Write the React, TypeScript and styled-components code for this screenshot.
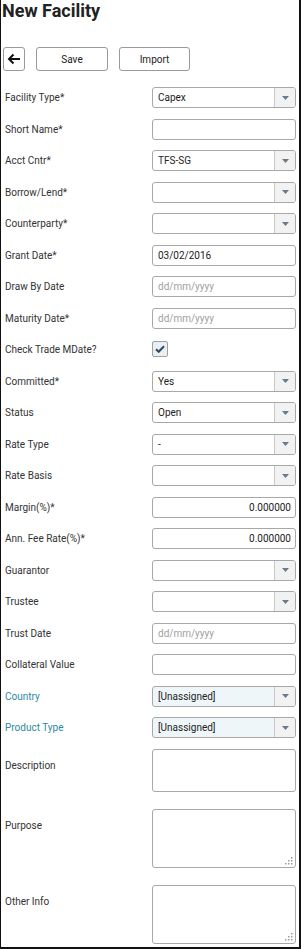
import styled, { createGlobalStyle } from "styled-components";

const GlobalStyle = createGlobalStyle`
  body {
    margin: 0;
    font-family: Roboto, "Liberation Sans", Arial, sans-serif;
    background: #fff;
  }
`;

const Page = styled.div`
  box-sizing: border-box;
  width: 301px;
  height: 949px;
  border-left: 1px solid #111;
  border-right: 2px solid #111;
  border-bottom: 2px solid #111;
  overflow: hidden;
`;

const Title = styled.h1`
  margin: 0;
  padding: 0 0 0 1px;
  font-size: 18px;
  line-height: 22px;
  font-weight: 700;
  color: #222;
`;

const Toolbar = styled.div`
  display: flex;
  gap: 11px;
  margin: 25px 0 0 2px;
  height: 24px;
`;

const Button = styled.button<{ $w: number }>`
  box-sizing: border-box;
  width: ${(p) => p.$w}px;
  height: 24px;
  padding: 0;
  border: 1px solid #9a9a9a;
  border-radius: 3px;
  background: #fff;
  font-family: inherit;
  font-size: 10px;
  color: #222;
  display: flex;
  align-items: center;
  justify-content: center;
`;

const Form = styled.div`
  margin-top: 16px;
  display: flex;
  flex-direction: column;
`;

const Row = styled.div<{ $h?: number }>`
  display: grid;
  grid-template-columns: 147px 144px;
  height: ${(p) => p.$h ?? 31.5}px;
  align-items: start;
  padding-left: 4px;
`;

const Label = styled.div<{ $link?: boolean; $top?: boolean }>`
  font-size: 10px;
  height: 21px;
  line-height: 21px;
  color: ${(p) => (p.$link ? "#2b8aa6" : "#333")};
  padding-top: ${(p) => (p.$top ? "6px" : "0")};
  white-space: nowrap;
`;

const Field = styled.div<{ $tint?: boolean; $h?: number }>`
  position: relative;
  box-sizing: border-box;
  height: ${(p) => p.$h ?? 21}px;
  border: 1px solid #a8a8a8;
  border-radius: 3px;
  background: ${(p) => (p.$tint ? "#eef6f9" : "#fff")};
  display: flex;
  align-items: stretch;
  overflow: hidden;
`;

const Value = styled.div<{ $placeholder?: boolean; $right?: boolean }>`
  flex: 1;
  font-size: 10px;
  line-height: 19px;
  padding: 0 4px 0 5px;
  color: ${(p) => (p.$placeholder ? "#a0a0a0" : "#222")};
  text-align: ${(p) => (p.$right ? "right" : "left")};
`;

const Arrow = styled.div`
  width: 20px;
  border-left: 1px solid #c8c8c8;
  background: #f2f2f2;
  display: flex;
  align-items: center;
  justify-content: center;
`;

const Check = styled.div`
  box-sizing: border-box;
  width: 16px;
  height: 16px;
  margin-top: 2px;
  border: 1px solid #a0a0a0;
  border-radius: 2px;
  background: #e9eff3;
  display: flex;
  align-items: center;
  justify-content: center;
`;

const Grip = styled.svg`
  position: absolute;
  right: 2px;
  bottom: 2px;
`;

type Kind = "select" | "text" | "check" | "area";

interface RowDef {
  label: string;
  kind: Kind;
  value?: string;
  placeholder?: boolean;
  right?: boolean;
  link?: boolean;
  tint?: boolean;
  h?: number;
  rowH?: number;
  grip?: boolean;
}

const rows: RowDef[] = [
  { label: "Facility Type*", kind: "select", value: "Capex" },
  { label: "Short Name*", kind: "text" },
  { label: "Acct Cntr*", kind: "select", value: "TFS-SG" },
  { label: "Borrow/Lend*", kind: "select" },
  { label: "Counterparty*", kind: "select" },
  { label: "Grant Date*", kind: "text", value: "03/02/2016" },
  { label: "Draw By Date", kind: "text", value: "dd/mm/yyyy", placeholder: true },
  { label: "Maturity Date*", kind: "text", value: "dd/mm/yyyy", placeholder: true },
  { label: "Check Trade MDate?", kind: "check" },
  { label: "Committed*", kind: "select", value: "Yes" },
  { label: "Status", kind: "select", value: "Open" },
  { label: "Rate Type", kind: "select", value: "-" },
  { label: "Rate Basis", kind: "select" },
  { label: "Margin(%)*", kind: "text", value: "0.000000", right: true },
  { label: "Ann. Fee Rate(%)*", kind: "text", value: "0.000000", right: true },
  { label: "Guarantor", kind: "select" },
  { label: "Trustee", kind: "select" },
  { label: "Trust Date", kind: "text", value: "dd/mm/yyyy", placeholder: true },
  { label: "Collateral Value", kind: "text" },
  { label: "Country", kind: "select", value: "[Unassigned]", link: true, tint: true },
  { label: "Product Type", kind: "select", value: "[Unassigned]", link: true, tint: true },
  { label: "Description", kind: "area", h: 43, rowH: 60 },
  { label: "Purpose", kind: "area", h: 59, rowH: 76, grip: true },
  { label: "Other Info", kind: "area", h: 59, rowH: 76, grip: true },
];

function BackIcon() {
  return (
    <svg width="14" height="12" viewBox="0 0 14 12">
      <path d="M13 6H2M6.5 1.5L2 6l4.5 4.5" fill="none" stroke="#111" strokeWidth="2" />
    </svg>
  );
}

function Caret() {
  return (
    <svg width="7" height="4" viewBox="0 0 7 4">
      <path d="M0 0h7L3.5 4z" fill="#6a7a88" />
    </svg>
  );
}

function FieldFor({ r }: { r: RowDef }) {
  if (r.kind === "check") {
    return (
      <Check>
        <svg width="10" height="8" viewBox="0 0 10 8">
          <path d="M1 4.2l2.7 2.6L9 1.2" fill="none" stroke="#2f4b63" strokeWidth="2" />
        </svg>
      </Check>
    );
  }
  if (r.kind === "area") {
    return (
      <Field $h={r.h}>
        {r.grip && (
          <Grip width="8" height="8" viewBox="0 0 8 8">
            {[
              [6, 0],
              [3, 3],
              [6, 3],
              [0, 6],
              [3, 6],
              [6, 6],
            ].map(([x, y]) => (
              <rect key={`${x}-${y}`} x={x} y={y} width="1.5" height="1.5" fill="#9a9a9a" />
            ))}
          </Grip>
        )}
      </Field>
    );
  }
  return (
    <Field $tint={r.tint}>
      <Value $placeholder={r.placeholder} $right={r.right}>
        {r.value}
      </Value>
      {r.kind === "select" && (
        <Arrow>
          <Caret />
        </Arrow>
      )}
    </Field>
  );
}

export default function App() {
  return (
    <Page>
      <GlobalStyle />
      <Title>New Facility</Title>
      <Toolbar>
        <Button $w={22}>
          <BackIcon />
        </Button>
        <Button $w={72}>Save</Button>
        <Button $w={71}>Import</Button>
      </Toolbar>
      <Form>
        {rows.map((r) => (
          <Row key={r.label} $h={r.rowH}>
            <Label $link={r.link} $top={r.kind === "area"}>
              {r.label}
            </Label>
            <FieldFor r={r} />
          </Row>
        ))}
      </Form>
    </Page>
  );
}
